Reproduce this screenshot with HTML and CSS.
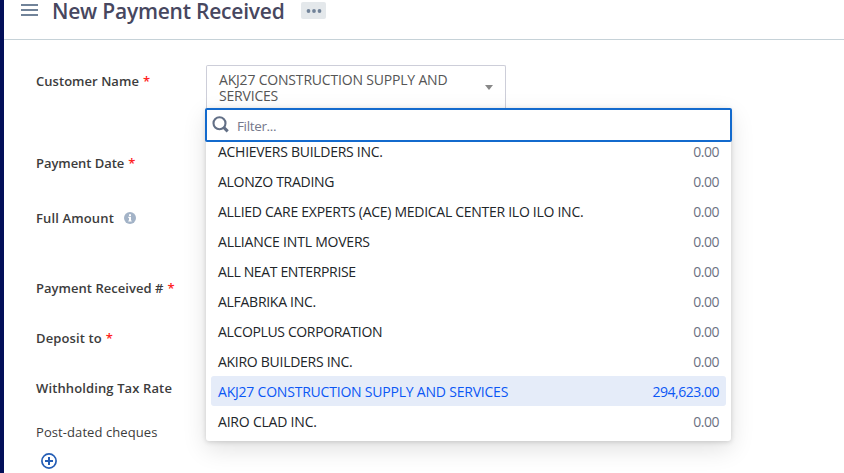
FILE: index.html
```html
<!DOCTYPE html>
<html lang="en">
<head>
<meta charset="utf-8">
<title>New Payment Received</title>
<link rel="stylesheet" href="styles.css">
</head>
<body>
<div class="app">
  <header class="header">
    <svg class="menu-icon" width="17" height="14" viewBox="0 0 17 14"><path d="M0 2h17M0 7h17M0 12h17" stroke="#718399" stroke-width="2"/></svg>
    <h1 class="title">New Payment Received</h1>
    <button class="more" aria-label="More"><svg width="16" height="6" viewBox="0 0 16 6" fill="#718399"><circle cx="2.5" cy="3" r="1.9"/><circle cx="8" cy="3" r="1.9"/><circle cx="13.5" cy="3" r="1.9"/></svg></button>
  </header>
  <main class="form">
    <div class="labels">
      <label class="label customer"><span>Customer Name</span> <b class="req">*</b></label>
      <label class="label date"><span>Payment Date</span> <b class="req">*</b></label>
      <label class="label amount"><span>Full Amount</span>
        <svg class="info" width="12" height="12" viewBox="0 0 12 12"><circle cx="6" cy="6" r="6" fill="#a3b3c7"/><path d="M5 2.3h2v1.6H5zM4.3 4.8H7v3.6h.7v1.2H4.3V8.4H5V6h-.7z" fill="#fff"/></svg></label>
      <label class="label number"><span>Payment Received #</span> <b class="req">*</b></label>
      <label class="label deposit"><span>Deposit to</span> <b class="req">*</b></label>
      <label class="label tax"><span>Withholding Tax Rate</span></label>
      <label class="label cheques"><span>Post-dated cheques</span></label>
      <svg class="add" width="16" height="16" viewBox="0 0 16 16" fill="none" stroke="#245db5"><circle cx="8" cy="8" r="7.1" stroke-width="1.7"/><path d="M8 4v8M4 8h8" stroke-width="2"/></svg>
    </div>
    <div class="field">
      <div class="select">
        <span class="value">AKJ27 CONSTRUCTION SUPPLY AND SERVICES</span>
        <svg width="8" height="5" viewBox="0 0 8 5"><path d="M0 0h8L4 5z" fill="#888"/></svg>
      </div>
      <div class="dropdown">
        <div class="filter">
          <svg width="18" height="18" viewBox="0 0 18 18" fill="none" stroke="#626f86"><circle cx="7.5" cy="7.3" r="6" stroke-width="2.1"/><path d="M11.7 11.4l4 4" stroke-width="3"/></svg>
          <span>Filter...</span>
        </div>
        <ul class="options">
          <li><span>ACHIEVERS BUILDERS INC.</span><em>0.00</em></li>
          <li><span>ALONZO TRADING</span><em>0.00</em></li>
          <li><span>ALLIED CARE EXPERTS (ACE) MEDICAL CENTER ILO ILO INC.</span><em>0.00</em></li>
          <li class="loose"><span>ALLIANCE INTL MOVERS</span><em>0.00</em></li>
          <li class="tight"><span>ALL NEAT ENTERPRISE</span><em>0.00</em></li>
          <li><span>ALFABRIKA INC.</span><em>0.00</em></li>
          <li class="tight"><span>ALCOPLUS CORPORATION</span><em>0.00</em></li>
          <li><span>AKIRO BUILDERS INC.</span><em>0.00</em></li>
          <li class="selected loose"><span>AKJ27 CONSTRUCTION SUPPLY AND SERVICES</span><em>294,623.00</em></li>
          <li class="loose"><span>AIRO CLAD INC.</span><em>0.00</em></li>
        </ul>
      </div>
    </div>
  </main>
</div>
</body>
</html>
```
FILE: styles.css
```css
* { box-sizing: border-box; }
body {
  margin: 0;
  height: 473px;
  overflow: hidden;
  background: #fff;
  font: 14px/20px "Open Sans", "Noto Sans", sans-serif;
  color: #3c3c3c;
}
.app { height: 473px; border-left: 4px solid #030f59; overflow: hidden; }
.header {
  height: 40px;
  display: flex;
  align-items: flex-start;
  border-bottom: 1px solid #c6d2d8;
}
.menu-icon { margin: 3px 0 0 17px; flex: none; }
.title {
  margin: 0 0 0 14px;
  width: 233px;
  font-size: 21px;
  line-height: 22px;
  font-weight: 600;
  letter-spacing: -0.22px;
  white-space: nowrap;
  color: #47475f;
}
.more {
  margin: 2px 0 0 16px;
  width: 25px;
  height: 17px;
  padding: 0;
  border: 0;
  border-radius: 2px;
  background: #e4e8eb;
  display: flex;
  align-items: center;
  justify-content: center;
}
.form { display: grid; grid-template-columns: 202px 526px; align-items: start; }
.labels { display: flex; flex-direction: column; padding: 31px 0 0 32px; }
.label {
  height: 20px;
  display: flex;
  align-items: center;
  gap: 4px;
  font-size: 13px;
  font-weight: 600;
  white-space: nowrap;
}
.req { color: #f22; font-weight: 600; }
.customer { letter-spacing: 0.04px; }
.date { margin-top: 62px; letter-spacing: -0.06px; }
.amount { margin-top: 35px; gap: 10px; letter-spacing: 0.14px; }
.number { margin-top: 50px; letter-spacing: 0.03px; }
.deposit { margin-top: 30px; letter-spacing: 0.12px; }
.tax { margin-top: 30px; letter-spacing: 0.12px; }
.cheques { margin-top: 24px; font-weight: 400; letter-spacing: 0.08px; }
.add { margin: 11px 0 0 5px; }
.field { padding-top: 25px; }
.select {
  width: 300px;
  height: 43px;
  padding: 6px 12px 0;
  border: 1px solid #cdced9;
  border-bottom: 0;
  border-radius: 2px 2px 0 0;
  display: flex;
  justify-content: space-between;
  color: #555;
  line-height: 16px;
}
.select svg { margin-top: 13px; flex: none; }
.value { width: 245px; letter-spacing: -0.19px; }
.dropdown {
  height: 333px;
  width: 525px;
  background: #fff;
  border-radius: 3px;
  box-shadow: 0 8px 24px rgba(0,0,0,.12), 0 1px 5px rgba(0,0,0,.16);
}
.filter {
  width: 527px;
  height: 34px;
  margin-left: -1px;
  border: 2px solid #136acd;
  border-radius: 2px;
  padding-left: 6px;
  display: flex;
  gap: 6px;
  color: #75788b;
}
.filter svg { margin-top: 6px; margin-left: -1px; margin-right: 1px; }
.filter span { margin-top: 6px; font-size: 13.5px; letter-spacing: -0.35px; }
.options {
  list-style: none;
  margin: 0;
  padding: 0 5px;
  height: 299px;
  overflow: hidden;
  color: #212529;
}
.options li {
  height: 30px;
  padding: 2px 7px 0;
  display: flex;
  align-items: center;
  justify-content: space-between;
  border-radius: 3px;
  letter-spacing: -0.28px;
  white-space: nowrap;
}
.options li:first-child { margin-top: -6px; }
.options .tight { letter-spacing: -0.36px; }
.options .loose { letter-spacing: -0.21px; }
.options em { font-style: normal; color: #6c7182; letter-spacing: -0.48px; }
.options .selected { background: #e5ecf9; color: #0b57f5; }
.options .selected em { color: #0b57f5; }
```
